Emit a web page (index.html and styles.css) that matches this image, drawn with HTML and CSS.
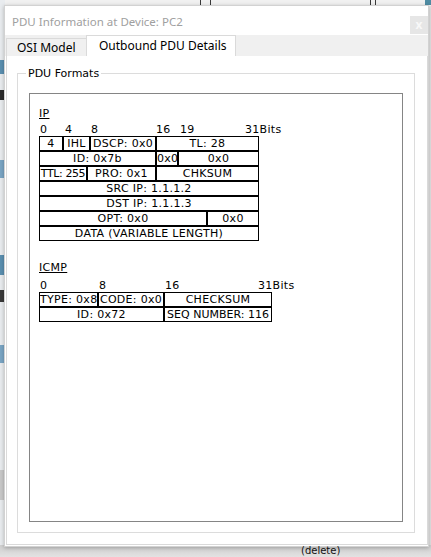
FILE: index.html
```html
<!DOCTYPE html>
<html>
<head>
<meta charset="utf-8">
<link rel="stylesheet" href="styles.css">
</head>
<body>
<div class="desk">
  <div class="bg-top">
    <span class="vl vl1"></span><span class="vl vl2"></span><span class="vl vl3"></span><span class="vl vl4"></span>
    <span class="bluetab"></span>
  </div>
  <div class="bg-left">
    <span class="chip c1"></span><span class="chip c2"></span><span class="chip c3"></span><span class="chip c4"></span><span class="chip c5"></span><span class="chip c6"></span><span class="chip c7"></span>
  </div>
  <div class="bg-bottom"><span class="del">(delete)</span></div>

  <div class="dialog">
    <div class="titlebar">
      <span class="title">PDU Information at Device: PC2</span>
      <span class="close">x</span>
    </div>
    <div class="tabs">
      <div class="tab">OSI Model</div>
      <div class="tab active">Outbound PDU Details</div>
    </div>
    <div class="panel">
      <fieldset class="group">
        <legend>PDU Formats</legend>
        <div class="inner">
          <div class="proto">IP</div>
          <div class="bits">
            <span class="b w25">0</span><span class="b w26">4</span><span class="b w65">8</span><span class="b w24">16</span><span class="b w65">19</span><span class="b">31Bits</span>
          </div>
          <div class="tbl ip">
            <div class="row"><span class="cell" style="width:24px">4</span><span class="cell" style="width:27px">IHL</span><span class="cell" style="width:66px">DSCP: 0x0</span><span class="cell" style="width:103px">TL: 28</span></div>
            <div class="row"><span class="cell" style="width:117px">ID: 0x7b</span><span class="cell" style="width:22px">0x0</span><span class="cell" style="width:81px">0x0</span></div>
            <div class="row"><span class="cell tight" style="width:48px">TTL: 255</span><span class="cell" style="width:69px">PRO: 0x1</span><span class="cell" style="width:103px">CHKSUM</span></div>
            <div class="row"><span class="cell" style="width:220px">SRC IP: 1.1.1.2</span></div>
            <div class="row"><span class="cell" style="width:220px">DST IP: 1.1.1.3</span></div>
            <div class="row"><span class="cell" style="width:168px">OPT: 0x0</span><span class="cell" style="width:52px">0x0</span></div>
            <div class="row"><span class="cell" style="width:220px">DATA (VARIABLE LENGTH)</span></div>
          </div>

          <div class="proto icmp">ICMP</div>
          <div class="bits icmpbits">
            <span class="b w59">0</span><span class="b w66">8</span><span class="b w93">16</span><span class="b">31Bits</span>
          </div>
          <div class="tbl">
            <div class="row"><span class="cell" style="width:59px">TYPE: 0x8</span><span class="cell" style="width:66px">CODE: 0x0</span><span class="cell" style="width:108px">CHECKSUM</span></div>
            <div class="row"><span class="cell" style="width:125px">ID: 0x72</span><span class="cell snug" style="width:108px">SEQ NUMBER: 116</span></div>
          </div>
        </div>
      </fieldset>
    </div>
  </div>
</div>
</body>
</html>
```

FILE: styles.css
```css
* { box-sizing: border-box; }
html, body { margin: 0; padding: 0; }
body {
  width: 431px;
  height: 557px;
  overflow: hidden;
  background: #e4e4e4;
  font-family: "DejaVu Sans", Verdana, sans-serif;
}
.desk {
  position: relative;
  width: 431px;
  height: 557px;
  overflow: hidden;
}

/* background canvas pieces */
.bg-top {
  position: absolute;
  left: 0; top: 0;
  width: 431px; height: 6px;
  background: #f1f1f1;
}
.vl { position: absolute; top: 0; width: 1px; height: 6px; background: #3a3a3a; }
.vl1 { left: 200px; }
.vl2 { left: 210px; }
.vl3 { left: 370px; }
.vl4 { left: 375px; }
.bluetab { position: absolute; left: 425px; top: 0; width: 6px; height: 5px; background: #4f8ca3; }

.bg-left {
  position: absolute;
  left: 0; top: 0;
  width: 5px; height: 557px;
  background: #e9ecef;
}
.chip { position: absolute; left: 0; width: 4px; }
.c1 { top: 60px; height: 14px; background: #5b8fb0; }
.c2 { top: 90px; height: 10px; background: #2b2b2b; }
.c3 { top: 160px; height: 18px; background: #7aa5c4; }
.c4 { top: 255px; height: 20px; background: #5b8fb0; }
.c5 { top: 290px; height: 12px; background: #3a3a3a; }
.c6 { top: 345px; height: 18px; background: #7aa5c4; }
.c7 { top: 470px; height: 30px; background: #c8c8c8; }

.bg-bottom {
  position: absolute;
  left: 0; top: 545px;
  width: 431px; height: 12px;
  background: linear-gradient(#cfcfcf, #e2e2e2);
}
.del {
  position: absolute;
  z-index: 3;
  left: 301px; top: 0;
  font-family: "DejaVu Sans", sans-serif;
  font-size: 10px;
  line-height: 12px;
  color: #111;
}

/* window */
.dialog {
  position: absolute;
  left: 4px; top: 5px;
  width: 425px; height: 542px;
  background: #ffffff;
  border: 1px solid #d2d2d2;
  box-shadow: 0 1px 4px rgba(0,0,0,0.25);
  display: flex;
  flex-direction: column;
  font-family: "Noto Sans", "Open Sans", sans-serif;
}
.titlebar {
  height: 29px;
  display: flex;
  align-items: center;
  justify-content: space-between;
  padding-left: 7px;
}
.title {
  font-size: 11.5px;
  color: #a0a0a0;
  margin-top: 2px;
}
.close {
  width: 18px; height: 18px;
  margin-top: 8px;
  background: #e6e6e6;
  color: #f8f8f8;
  font-size: 12px;
  font-weight: bold;
  line-height: 17px;
  text-align: center;
}
.tabs {
  height: 21px;
  background: #f0f0f0;
  display: flex;
  align-items: flex-end;
  padding-left: 1px;
  margin-bottom: -1px;
  position: relative;
  z-index: 1;
}
.tab {
  height: 18px;
  width: 80px;
  padding: 0 0 0 10px;
  font-size: 12px;
  line-height: 17px;
  color: #000;
  white-space: nowrap;
  border: 1px solid #dadada;
  border-right: none;
  border-bottom: none;
  background: #f0f0f0;
}
.tab.active {
  height: 21px;
  width: 150px;
  background: #ffffff;
  border-right: 1px solid #dadada;
  padding-left: 12px;
  line-height: 19px;
}

.panel {
  flex: 1;
  margin: 0 0 1px 1px;
  border: 1px solid #dadada;
  background: #fff;
  padding: 11px 12px 0 10px;
}
.group {
  margin: 0;
  padding: 0 11px 10px 11px;
  border: 1px solid #dcdcdc;
  min-width: 0;
}
.group legend {
  font-family: "DejaVu Sans", sans-serif;
  font-size: 11px;
  line-height: 13px;
  color: #000;
  padding: 0 2px;
  margin-left: -3px;
}
.inner {
  height: 429px;
  margin-top: 13px;
  border: 1px solid #858585;
  padding: 13px 0 0 9px;
  font-family: "DejaVu Sans", Verdana, sans-serif;
  font-size: 11px;
  line-height: 13px;
  letter-spacing: 0.3px;
  color: #000;
}
.proto {
  text-decoration: underline;
  height: 13px;
}
.proto.icmp { margin-top: 20px; }
.bits {
  display: flex;
  margin-top: 3px;
  padding-left: 1px;
  height: 13px;
  white-space: nowrap;
}
.icmpbits { margin-top: 5px; }
.b { display: block; flex: none; }
.w24 { width: 24px; }
.w25 { width: 25px; }
.w26 { width: 26px; }
.w59 { width: 59px; }
.w65 { width: 65px; }
.w66 { width: 66px; }
.w93 { width: 93px; }
.tbl { display: flex; flex-direction: column; }
.row { display: flex; }
.cell {
  flex: none;
  height: 15px;
  border: 1px solid #000;
  text-align: center;
  line-height: 13px;
  white-space: nowrap;
  overflow: hidden;
}
.cell.tight { letter-spacing: -0.4px; }
.cell.snug { letter-spacing: 0; }
```
